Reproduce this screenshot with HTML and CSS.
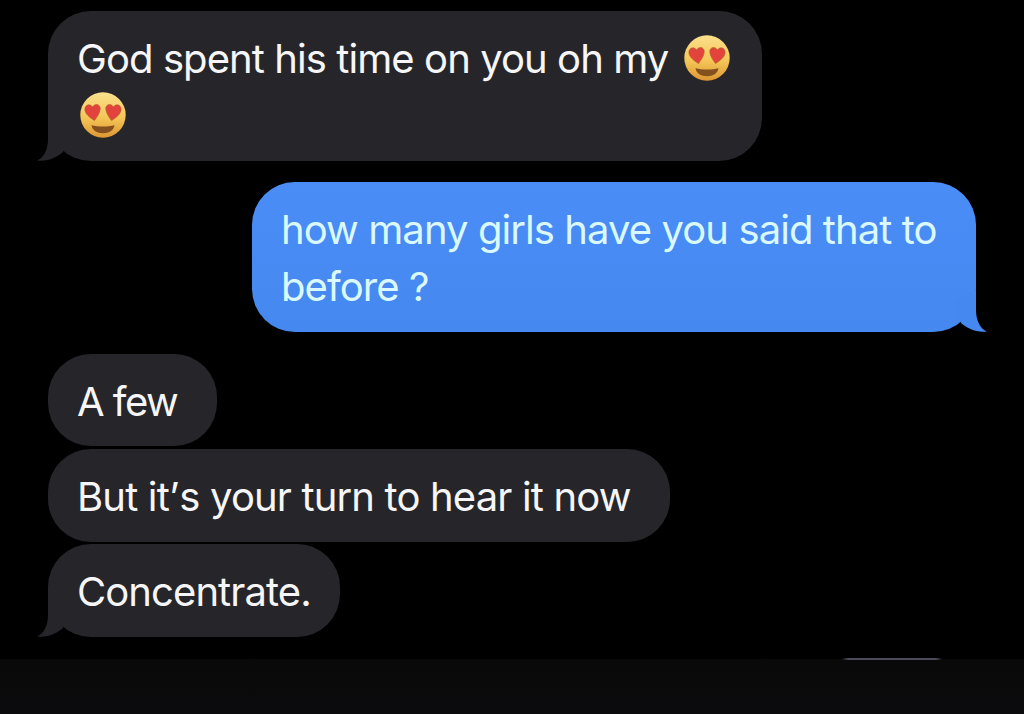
FILE: index.html
```html
<!DOCTYPE html>
<html lang="en">

<head>
    <meta charset="UTF-8" />
    <meta name="viewport" content="width=device-width, initial-scale=1.0" />
    <title>Messages</title>
    <link rel="stylesheet" href="styles.css">
</head>

<body>

<!-- shared shapes -->
<svg class="defs" width="0" height="0" aria-hidden="true">
    <defs>
        <linearGradient id="face" x1="0" y1="0" x2="0" y2="1">
            <stop offset="0" stop-color="#fbe08c" />
            <stop offset="0.55" stop-color="#f5c758" />
            <stop offset="1" stop-color="#dd9632" />
        </linearGradient>
    </defs>
    <symbol id="heart-eyes" viewBox="0 0 46 46">
        <circle cx="23" cy="23" r="22.7" fill="url(#face)" />
        <g fill="#e3433d" stroke="#b5602e" stroke-width="0.7">
            <path d="M14.5 28.5C10 25.5 4.9 22 4.9 17.2C4.9 12.6 10.4 11.3 12.5 15.1C14.9 11 20.6 12.2 20.2 17C19.9 21 17 25 14.5 28.5Z" />
            <path d="M31.5 28.5C36 25.5 41.1 22 41.1 17.2C41.1 12.6 35.6 11.3 33.5 15.1C31.1 11 25.4 12.2 25.8 17C26.1 21 29 25 31.5 28.5Z" />
        </g>
        <path d="M11.5 33.3C18 35 28 35 34.5 33.3C33.7 38.5 29 41.3 23 41.3C17 41.3 12.3 38.5 11.5 33.3Z" fill="#85501f" />
    </symbol>
    <symbol id="tail" viewBox="0 0 36 50">
        <path d="M12 8V28C12 38 8 47 1 49.5C12 51 21 46 27 41L34 20Z" />
    </symbol>
</svg>

<main class="chat">
    <div class="bubble bubble--in bubble--god">
        <div class="line">
            <span class="text">God spent his time on you oh my</span>
            <svg class="emoji"><use href="#heart-eyes" /></svg>
        </div>
        <div class="line">
            <svg class="emoji emoji--first"><use href="#heart-eyes" /></svg>
        </div>
        <svg class="tail"><use href="#tail" /></svg>
    </div>

    <div class="bubble bubble--out">
        <p class="text">how many girls have you said that to<br>before ?</p>
        <svg class="tail tail--out"><use href="#tail" /></svg>
    </div>

    <div class="bubble bubble--in bubble--few">
        <p class="text">A few</p>
    </div>
    <div class="bubble bubble--in bubble--turn">
        <p class="text">But it<span class="apostrophe">’</span>s your turn to hear it now</p>
    </div>
    <div class="bubble bubble--in bubble--last">
        <p class="text">Concentrate.</p>
        <svg class="tail"><use href="#tail" /></svg>
    </div>
</main>

<footer class="bar">
    <div class="bar__edge"></div>
</footer>

</body>
</html>
```

FILE: styles.css
```css
*,
*::before,
*::after {
    box-sizing: border-box;
}

html,
body,
p {
    margin: 0;
    padding: 0;
}

body {
    display: flex;
    flex-direction: column;
    height: 714px;
    overflow: hidden;
    background: #000;
    font-family: Inter, "Liberation Sans", sans-serif;
    font-size: 40px;
    line-height: 57px;
    letter-spacing: -0.92px;
}

.defs {
    position: absolute;
}

.chat {
    display: flex;
    flex-direction: column;
    align-items: flex-start;
    height: 658px;
    padding: 11px 48px 0;
}

.bubble {
    position: relative;
    padding: 19px 29px 17px;
    border-radius: 43px;
    white-space: nowrap;
}

.bubble--in {
    background: #26262a;
    color: #f6f6f8;
    fill: #26262a;
}
.bubble--out {
    align-self: flex-end;
    width: 724px;
    height: 150px;
    margin: 21px 0 22px;
    background: linear-gradient(#4b8df7, #4588ef);
    color: #daf9ff;
    fill: #4588ef;
}

.bubble--god {
    width: 714px;
    height: 150px;
}
.bubble--few {
    width: 169px;
    height: 92px;
    margin-bottom: 3px;
    letter-spacing: -1.5px;
}
.bubble--turn {
    width: 622px;
    height: 93px;
    margin-bottom: 2px;
    letter-spacing: -0.84px;
}
.bubble--last {
    width: 292px;
    height: 93px;
}

.apostrophe {
    letter-spacing: 0;
}

.line {
    display: flex;
    gap: 16px;
    height: 57px;
}

.emoji {
    width: 46px;
    height: 46px;
    margin-top: 5px;
}
.emoji--first {
    margin-left: 3px;
}

.tail {
    position: absolute;
    left: -12px;
    bottom: 0;
    width: 36px;
    height: 50px;
}
.tail--out {
    left: auto;
    right: -12px;
    transform: scaleX(-1);
}

.bar {
    display: flex;
    justify-content: flex-end;
    height: 56px;
    padding-right: 82px;
    background: linear-gradient(#000 1px, #090909 1px, #0b0b0d);
}
.bar__edge {
    width: 100px;
    height: 2px;
    background: linear-gradient(90deg, transparent, #4c4a58 6%, #4c4a58 94%, transparent);
}
```
